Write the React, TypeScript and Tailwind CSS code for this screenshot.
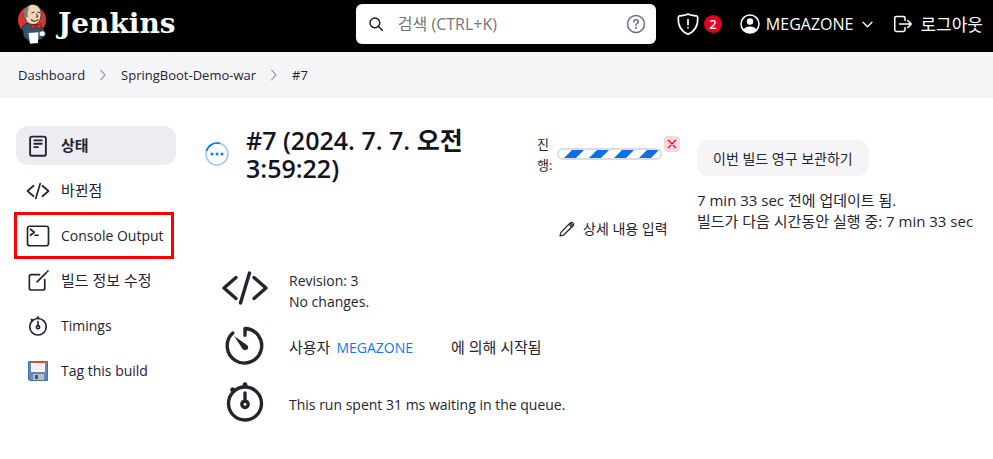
import type { ReactNode } from 'react'

const kr = "font-['Open_Sans','Noto_Sans_CJK_KR',sans-serif]"

function JenkinsLogo() {
  return (
    <svg width="30" height="42" viewBox="4 3 30 42" aria-hidden="true">
      <ellipse cx="18" cy="20" rx="14" ry="14" fill="#d33833" />
      <path d="M8 27l5-4 10 2 6 3 2 5-3 6-12 3-6-5z" fill="#33536b" stroke="#16222c" strokeWidth=".8" />
      <path d="M11 13C11 7 15 4.500 19 4.500c5 0 8 4 8 9 0 6-2 11-8 11-4 0-7-3-7.500-6-2-1-2-3-.5-5.500z" fill="#f0d6b7" stroke="#2a211b" strokeWidth=".7" />
      <path d="M11 18c-3-5-1-10 4-12.500-1 3 0 5-1.500 7l.5 5c-1-.5-2-.5-3 .5z" fill="#827c76" />
      <path d="M17.500 13l3-1M23.500 12l2.500.6M17 19.500c2 2 5 2 7.500 0M22.500 13.500l1.200 3.500h-2" fill="none" stroke="#5a3b2b" strokeWidth="1.100" />
      <path d="M17 24l5 2 5-2.500v5.500l-5-2-5 2z" fill="#d33833" stroke="#81001a" strokeWidth=".6" />
      <path d="M14.500 33l10-.8-.5 10.800-8 .8z" fill="#fff" />
      <path d="M25 33c1-2.500 5-3 6-.5 1 2.500-.5 4-3 4s-3-1.500-3-3.500z" fill="#f4f4f4" stroke="#222" strokeWidth=".7" />
    </svg>
  )
}

function Line({ size = 24, children, sw = 36 }: { size?: number; children: ReactNode; sw?: number }) {
  return (
    <svg className="shrink-0" width={size} height={size} viewBox="0 0 512 512" fill="none" stroke="currentColor" strokeWidth={sw} strokeLinecap="round" strokeLinejoin="round" aria-hidden="true">
      {children}
    </svg>
  )
}

const Code = ({ size = 24 }: { size?: number }) => (
  <Line size={size}>
    <path d="M160 368L32 256l128-112M352 368l128-112-128-112M304 96l-96 320" />
  </Line>
)

const Watch = ({ size = 24 }: { size?: number }) => (
  <Line size={size}>
    <circle cx="256" cy="272" r="176" />
    <circle cx="256" cy="280" r="34" />
    <path d="M256 246V160" />
    <path d="M256 84V72M132 134l-8-8" strokeWidth="52" />
  </Line>
)

const Chevron = () => (
  <Line size={14} sw={42}>
    <path stroke="#9a9aaf" d="M168 80l160 176-160 176" />
  </Line>
)

function Floppy() {
  return (
    <svg className="shrink-0" width="24" height="24" viewBox="0 0 24 24" aria-hidden="true">
      <path d="M2.500 2.500h19v19h-18l-1-1z" fill="#6088bd" stroke="#4b6ea0" />
      <path d="M5 3h14v10H5z" fill="#f6f8fa" />
      <path d="M5 2h14v2H5z" fill="#e5432b" />
      <path d="M7 7h10M7 10h10" stroke="#dce0e6" />
      <path d="M7 15h11v6H7z" fill="#bcbcb8" />
      <path d="M9 16h3v4H9z" fill="#4c5664" />
    </svg>
  )
}

const tasks: { label: string; icon: ReactNode; style?: string; marked?: boolean }[] = [
  {
    label: '상태',
    style: 'bg-[#ebedf3] text-[15px] font-semibold',
    icon: (
      <Line sw={40}>
        <rect x="88" y="56" width="336" height="408" rx="40" />
        <path d="M176 136h160M176 208h160M176 280h80" />
      </Line>
    ),
  },
  { label: '바뀐점', style: 'text-[15px]', icon: <Code /> },
  {
    label: 'Console Output',
    marked: true,
    icon: (
      <Line>
        <rect x="32" y="48" width="448" height="416" rx="48" />
        <path d="M96 112l80 64-80 64M192 240h64" />
      </Line>
    ),
  },
  {
    label: '빌드 정보 수정',
    style: 'text-[15px]',
    icon: (
      <Line>
        <path d="M400 224v184a40 40 0 01-40 40H112a40 40 0 01-40-40V160a40 40 0 0140-40h176M236 276L440 72M464 46l4-4" />
      </Line>
    ),
  },
  { label: 'Timings', icon: <Watch /> },
  { label: 'Tag this build', icon: <Floppy /> },
]

function Header() {
  return (
    <header className="flex h-13 items-center justify-between bg-black pr-2.5 pl-4.5 text-white">
      <a href="#home" className="flex items-center gap-2.5 pb-1">
        <JenkinsLogo />
        <span className="font-['DejaVu_Serif',serif] text-[28px] leading-8 font-bold">Jenkins</span>
      </a>
      <div className="flex items-center pb-1">
        <label className="mr-5 flex h-10 w-75 items-center rounded-md bg-white px-3 text-[#14141f]">
          <Line size={16} sw={44}>
            <circle cx="220" cy="220" r="156" />
            <path d="M338 338l126 126" />
          </Line>
          <input
            type="search"
            aria-label="검색"
            placeholder="검색 (CTRL+K)"
            className="ml-3.5 w-full min-w-0 bg-transparent text-base outline-none placeholder:text-[#757575]"
          />
          <svg className="-mr-0.5 shrink-0" width="20" height="20" viewBox="0 0 20 20" fill="none" stroke="#6b6b8c" strokeWidth="1.500" strokeLinecap="round" aria-hidden="true">
            <circle cx="10" cy="10" r="8.500" />
            <path d="M7.800 8c0-3 4.600-2.800 4.600-.2C12.400 9.500 10 9.500 10 11.200" />
            <path d="M10 13.800v.2" strokeWidth="2" />
          </svg>
        </label>
        <button type="button" aria-label="보안 경고" className="mr-4.5 flex items-center gap-1">
          <Line size={24}>
            <path d="M463 112c-4-15-16-26-32-28C366 75 290 66 256 42c-34 24-110 33-175 42-16 2-28 13-32 28-12 190 60 300 207 364 147-64 219-174 207-364zM256 160v112M256 330v6" />
          </Line>
          <span className="flex size-4.5 items-center justify-center rounded-full bg-[#e6001f] text-[13px] leading-none font-semibold">2</span>
        </button>
        <a href="#user" className="flex items-center gap-1.5 text-base">
          <svg width="20" height="20" viewBox="0 0 20 20" aria-hidden="true">
            <circle cx="10" cy="10" r="9" fill="none" stroke="white" strokeWidth="1.500" />
            <circle cx="10" cy="7.500" r="3.200" fill="white" />
            <path d="M3.500 15.500c2-4 11-4 13 0-3 4.500-10 4.500-13 0z" fill="white" />
          </svg>
          MEGAZONE
        </a>
        <button type="button" aria-label="사용자 메뉴" className="mr-4.5 ml-2">
          <Line size={13} sw={52}>
            <path d="M80 170l176 172 176-172" />
          </Line>
        </button>
        <a href="#logout" className="flex items-center gap-1.5 text-[17px] whitespace-nowrap">
          <Line size={22}>
            <path d="M304 336v56a40 40 0 01-40 40H104a40 40 0 01-40-40V120a40 40 0 0140-40h152c22 0 48 18 48 40v56M368 336l80-80-80-80M176 256h256" />
          </Line>
          로그아웃
        </a>
      </div>
    </header>
  )
}

export default function App() {
  return (
    <div className={`${kr} bg-white text-sm leading-[21px] text-[#24242f]`}>
      <Header />
      <nav aria-label="breadcrumb" className="flex h-11.5 items-center gap-[11px] bg-[#f5f5f8] px-4.5 text-[13px]">
        <a href="#dashboard">Dashboard</a>
        <Chevron />
        <a href="#job">SpringBoot-Demo-war</a>
        <Chevron />
        <a href="#build">#7</a>
      </nav>
      <div className="flex gap-7 px-4 pt-7">
        <nav aria-label="build" className="flex w-40 shrink-0 flex-col gap-1.5">
          {tasks.map((t) => (
            <a key={t.label} href="#task" className={`relative flex h-[39px] items-center gap-[11px] rounded-xl px-2.5 whitespace-nowrap ${t.style ?? ''}`}>
              {t.icon}
              {t.label}
              {t.marked && <span className="absolute -inset-y-1 right-0.5 -left-0.5 border-3 border-[#fc0000]" />}
            </a>
          ))}
        </nav>
        <main className="min-w-0 flex-1">
          <div className="flex items-start">
            <div className="flex flex-1 items-center gap-4">
              <svg className="shrink-0" width="26" height="26" viewBox="0 0 26 26" fill="none" aria-hidden="true">
                <circle cx="13" cy="13" r="11" stroke="#99c9fc" strokeWidth="1.500" />
                <path d="M2.500 10A11 11 0 0116 2.400" stroke="#0b7bee" strokeWidth="1.700" />
                <g fill="#0b7bee">
                  <circle cx="8" cy="13" r="1.500" />
                  <circle cx="13" cy="13" r="1.500" />
                  <circle cx="18" cy="13" r="1.500" />
                </g>
              </svg>
              <h1 className="max-w-60 text-[25px] leading-7 font-semibold text-[#14141f]">#7 (2024. 7. 7. 오전 3:59:22)</h1>
            </div>
            <div className="w-40 shrink-0 pt-2">
              <div className="flex">
                <span className="w-5 text-[13px] leading-[21px] break-all">진행:</span>
                <div role="progressbar" aria-label="진행" className="mt-3.5 h-3 w-[105px] overflow-hidden rounded-full border-2 border-[#dcdce4]">
                  <svg width="101" height="8" viewBox="0 0 101 8" fill="#0b6fe8" aria-hidden="true">
                    <path d="M5 8L13 0h12l-8 8zM30 8l8-8h12l-8 8zM55 8l8-8h12l-8 8zM80 8l8-8h12l-8 8z" />
                  </svg>
                </div>
                <button type="button" aria-label="중지" className="mt-0.5 ml-0.5 flex size-4 items-center justify-center rounded-sm bg-[#fbd5dc] text-[#e6001f]">
                  <Line size={12} sw={48}>
                    <path d="M96 96l320 320M416 96L96 416" />
                  </Line>
                </button>
              </div>
              <a href="#edit" className="mt-10.5 ml-5.5 flex items-center gap-2 whitespace-nowrap">
                <Line size={16} sw={40}>
                  <path d="M358 62L62 364 32 480l116-30 302-296zM358 62c26-28 64-28 88-2 26 26 28 64 4 94M320 102l92 92" />
                </Line>
                상세 내용 입력
              </a>
            </div>
            <div className="w-70 shrink-0 pt-3.5">
              <button type="button" className="h-9 rounded-xl bg-[#f5f5f8] px-4">이번 빌드 영구 보관하기</button>
              <p className="mt-3.5 text-[15px] leading-[21px] whitespace-nowrap">
                7 min 33 sec 전에 업데이트 됨.
                <br />
                빌드가 다음 시간동안 실행 중: 7 min 33 sec
              </p>
            </div>
          </div>
          <ul className="mt-5 ml-[17px]">
            <li className="flex h-[57px] items-center gap-5">
              <Code size={48} />
              <p className="pt-1.5">
                Revision: 3<br />
                No changes.
              </p>
            </li>
            <li className="flex h-[57px] items-center gap-5">
              <Line size={48}>
                <path d="M126 128a184 184 0 10130-48v72" />
                <path d="M232 300L140 160l136 96c34 26 0 76-44 44z" fill="currentColor" stroke="none" />
              </Line>
              <p className="flex gap-1.5 pt-1.5 text-[15px] leading-[21px]">
                사용자
                <a href="#megazone" className="mr-8 text-sm leading-[21px] text-[#0b7bee]">MEGAZONE</a>
                에 의해 시작됨
              </p>
            </li>
            <li className="flex h-[57px] items-center gap-5">
              <Watch size={48} />
              <p className="pt-1.5">This run spent 31 ms waiting in the queue.</p>
            </li>
          </ul>
        </main>
      </div>
    </div>
  )
}
